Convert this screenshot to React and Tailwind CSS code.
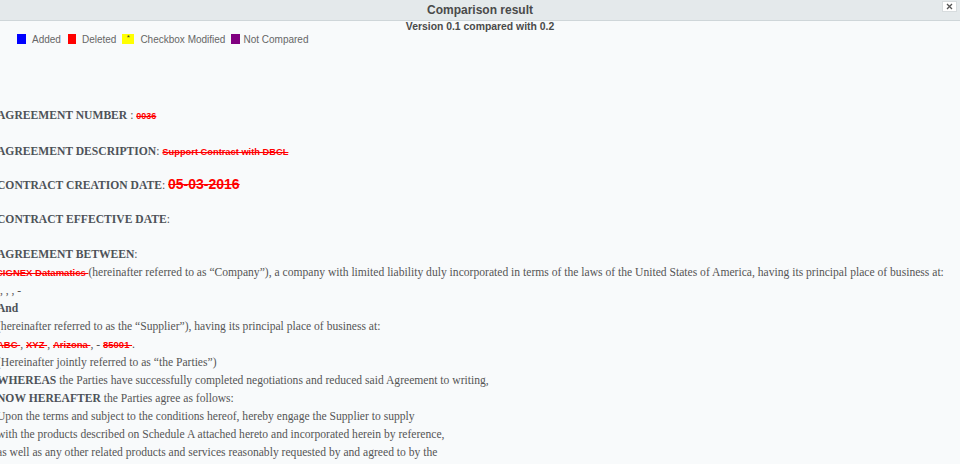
export default function App() {
  const serif = { fontFamily: '"Liberation Serif", "Times New Roman", serif' };
  const del = "text-[#ff0000] line-through font-bold [font-family:'Liberation_Sans',Arial,sans-serif]";
  const hd = "font-bold text-[#4d5258]";
  return (
    <div className="w-[960px] h-[464px] overflow-hidden bg-[#f8fafb] [font-family:'Liberation_Sans',Arial,sans-serif]">
      <div className="relative h-[21px] bg-[#e4e9eb] border-b border-[#cfd6d9] flex items-center justify-center">
        <span className="text-[12px] font-bold text-[#4a4a4a]">Comparison result</span>
        <button className="absolute right-[3px] top-[1px] w-[15px] h-[11px] bg-white border border-[#d7dcde] flex items-center justify-center">
          <svg width="7" height="7" viewBox="0 0 7 7"><path d="M1 1L6 6M6 1L1 6" stroke="#555" strokeWidth="1.3" /></svg>
        </button>
      </div>
      <div className="text-center text-[10.4px] font-bold text-[#4a4a4a] leading-[12px]">Version 0.1 compared with 0.2</div>
      <div className="flex items-center h-[12px] ml-[17px] text-[10px] text-[#666]">
        <span className="w-[9px] h-[10px] bg-[#0000ff] mr-[6px]"></span>
        <span className="mr-[7px]">Added</span>
        <span className="w-[8px] h-[10px] bg-[#ff0000] mr-[6px]"></span>
        <span className="mr-[6px]">Deleted</span>
        <span className="w-[12px] h-[10px] bg-[#ffff00] mr-[6px] text-[8px] leading-[8px] text-center text-[#333]">*</span>
        <span className="mr-[6px]">Checkbox Modified</span>
        <span className="w-[9px] h-[10px] bg-[#800080] mr-[3px]"></span>
        <span>Not Compared</span>
      </div>
      <div className="ml-[-3px] text-[11.6px] text-[#555]" style={serif}>
        <div className="mt-[62px] leading-[18px]">
          <span className={hd}>AGREEMENT NUMBER</span> : <span className={del + " text-[9px]"}>0036</span>
        </div>
        <div className="mt-[18px] leading-[18px]">
          <span className={hd}>AGREEMENT DESCRIPTION</span>: <span className={del + " text-[9.3px]"}>Support Contract with DBCL</span>
        </div>
        <div className="mt-[14px] leading-[18px]">
          <span className={hd}>CONTRACT CREATION DATE</span>: <span className={del + " text-[14px]"}>05-03-2016 </span>
        </div>
        <div className="mt-[16px] leading-[18px]">
          <span className={hd}>CONTRACT EFFECTIVE DATE</span>:
        </div>
        <div className="mt-[17px] leading-[18px]">
          <span className={hd}>AGREEMENT BETWEEN</span>:
        </div>
        <div className="leading-[18px] ml-[-1px] whitespace-nowrap">
          <span className={del + " text-[9.5px]"}>CIGNEX Datamatics </span>(hereinafter referred to as “Company”), a company with limited liability duly incorporated in terms of the laws of the United States of America, having its principal place of business at:
        </div>
        <div className="leading-[18px]">&nbsp;, , , -</div>
        <div className={"leading-[18px] " + hd}>And</div>
        <div className="leading-[18px]">(hereinafter referred to as the “Supplier”), having its principal place of business at:</div>
        <div className="leading-[18px]">
          <span className={del + " text-[9.5px]"}>ABC </span>, <span className={del + " text-[9.5px]"}>XYZ </span>, <span className={del + " text-[9.5px]"}>Arizona </span>, - <span className={del + " text-[9.5px]"}>85001 </span>.
        </div>
        <div className="leading-[18px]">(Hereinafter jointly referred to as “the Parties”)</div>
        <div className="leading-[18px]"><span className={hd}>WHEREAS</span> the Parties have successfully completed negotiations and reduced said Agreement to writing,</div>
        <div className="leading-[18px]"><span className={hd}>NOW HEREAFTER</span> the Parties agree as follows:</div>
        <div className="leading-[18px]">Upon the terms and subject to the conditions hereof, hereby engage the Supplier to supply</div>
        <div className="leading-[18px]">with the products described on Schedule A attached hereto and incorporated herein by reference,</div>
        <div className="leading-[18px]">as well as any other related products and services reasonably requested by and agreed to by the</div>
      </div>
    </div>
  );
}
